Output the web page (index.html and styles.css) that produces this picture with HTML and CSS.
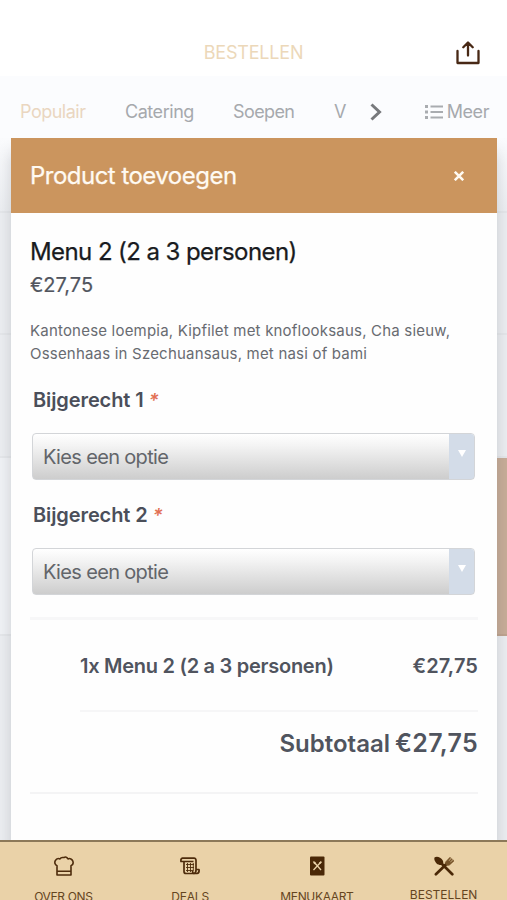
FILE: index.html
```
<!DOCTYPE html>
<html lang="nl">
<head>
<meta charset="utf-8">
<meta name="viewport" content="width=device-width, initial-scale=1">
<title>Bestellen</title>
<link rel="stylesheet" href="styles.css">
</head>
<body>
<div class="app">
  <header class="topbar">
    <h1 class="topbar-title">BESTELLEN</h1>
    <svg class="share" viewBox="0 0 24 24" fill="none" stroke="#482815" stroke-width="2.3" stroke-linecap="round" stroke-linejoin="round"><path d="M1.500 10v12h21V10M12 14.500V2M7.300 6.300L12 1.500L16.700 6.300"/></svg>
  </header>
  <nav class="tabs">
    <span class="tab tab-active">Populair</span>
    <span class="tab tab-catering">Catering</span>
    <span class="tab tab-soepen">Soepen</span>
    <span class="tab tab-cut">V</span>
    <svg class="chevron" viewBox="0 0 12 18" fill="none" stroke="#77797c" stroke-width="3"><path d="M1.500 1.500L9.500 9L1.500 16.500"/></svg>
    <span class="more">
      <svg class="list" viewBox="0 0 18 14" fill="#a9acb0"><path d="M0 0h3v3H0zM0 5.500h3v3H0zM0 11h3v3H0zM5.500 .5H18v2H5.500zM5.500 6H18v2H5.500zM5.500 11.500H18v2H5.500z"/></svg>
      <span class="tab tab-more">Meer</span>
    </span>
  </nav>
  <main class="stage">
    <div class="side"><i class="row row-a"></i><i class="row row-b"></i><i class="row row-c"></i><i class="row row-d"></i></div>
    <section class="modal">
      <div class="modal-head">
        <h2 class="modal-title">Product toevoegen</h2>
        <svg class="close" viewBox="0 0 10 10" stroke="#fffaf2" stroke-width="2.500"><path d="M.8 .8L9.200 9.200M9.200 .8L.8 9.200"/></svg>
      </div>
      <div class="modal-body">
        <h3 class="product">Menu 2 (2 a 3 personen)</h3>
        <p class="price">€27,75</p>
        <p class="desc">Kantonese loempia, Kipfilet met knoflooksaus, Cha sieuw,<br>Ossenhaas in Szechuansaus, met nasi of bami</p>
        <div class="field">
          <label class="label">Bijgerecht 1 <em class="star">*</em></label>
          <div class="select"><span class="value">Kies een optie</span><span class="arrow"><svg viewBox="0 0 8 7" class="tri"><path d="M0 0h8L4 7z" fill="#fff"/></svg></span></div>
        </div>
        <div class="field">
          <label class="label">Bijgerecht 2 <em class="star">*</em></label>
          <div class="select"><span class="value">Kies een optie</span><span class="arrow"><svg viewBox="0 0 8 7" class="tri"><path d="M0 0h8L4 7z" fill="#fff"/></svg></span></div>
        </div>
        <div class="summary">
          <div class="line"><span class="line-name">1x Menu 2 (2 a 3 personen)</span><span class="line-price">€27,75</span></div>
          <div class="subtotal">Subtotaal <span class="amount">€27,75</span></div>
        </div>
      </div>
    </section>
    <div class="side"><i class="row row-a"></i><i class="row row-b"></i><i class="row row-c"></i><i class="row row-d row-tan"></i></div>
  </main>
  <footer class="nav">
    <div class="item">
      <svg class="icon icon-hat" viewBox="0 0 20 20" fill="none" stroke="#4e2c0c" stroke-width="1.600" stroke-linejoin="round"><path d="M3 19V9.700C.8 8.800 .4 6.500 1.300 4.700C2.200 2.900 4.300 2.200 6 2.900C7.200 .7 8.800 1.800 10 1.500C11.500 .6 13 1 14 2.900C16 2 18.100 3.100 18.800 5C19.500 7 18.700 9 17 9.700V19zM3 15.200H17"/></svg>
      <span class="caption cap-tight">OVER ONS</span>
    </div>
    <div class="item">
      <svg class="icon" viewBox="0 0 20 20" fill="none" stroke="#4e2c0c" stroke-width="1.700" stroke-linejoin="round"><path d="M4 5.500V15.500Q4 17.500 6 17.500H17Q19.500 17 19 13.500H16V4.500Q16 2.200 14 2.200H2.500Q.5 2.500 1 5.500H13.500"/><path d="M16 14Q16 17.500 13.800 17.500Q12.500 17 12.500 15"/><path d="M6 8.500H14M6 11.500H14M6 14.500H13M7.500 7V16M10.500 7V16M13.300 7V15" stroke-width=".9"/></svg>
      <span class="caption cap-deals">DEALS</span>
    </div>
    <div class="item">
      <svg class="icon" viewBox="0 0 20 20"><rect x="3" y=".5" width="14.500" height="19" rx="1" fill="#4a2807"/><path d="M7 6L14 14M13.500 6.500L6.500 14" stroke="#ead2a8" stroke-width="1.300"/><path d="M5.800 5.300L8.500 6L8.800 8.600L7 8zM11.800 7L13.800 4.900L15 6.200L12.900 8.200z" fill="#ead2a8"/></svg>
      <span class="caption cap-tight">MENUKAART</span>
    </div>
    <div class="item item-current">
      <svg class="icon" viewBox="0 0 20 20" fill="#4a2807"><path d="M.7 1.200C3 -.2 7 1.200 8.500 4C9.500 5.700 9.500 7 8.700 8.500C6.800 9.300 4.200 8.800 2.600 7.400C.7 5.500 -.3 3 .7 1.200z"/><path d="M7 7L18.300 18.300M1.900 18.300L13 7.500" stroke="#4a2807" stroke-width="2.700" stroke-linecap="round"/><path d="M11.500 6L16 1.200L16.700 1.900L14.500 4.400L15.300 5.100L17.700 2.600L18.400 3.300L16 5.900L16.700 6.500L19.200 4.100L20 4.900L15.500 9Q13.500 10 12 8.500Q10.800 7.200 11.500 6z" fill="#765329" stroke="#765329" stroke-width=".6"/></svg>
      <span class="caption">BESTELLEN</span>
    </div>
  </footer>
</div>
</body>
</html>
```
FILE: styles.css
```
* { box-sizing: border-box; }
body { margin: 0; font-family: Inter, "Liberation Sans", sans-serif; background: #fff; }
h1, h2, h3, p { margin: 0; font-weight: 400; }
.app { width: 507px; height: 900px; display: flex; flex-direction: column; overflow: hidden; }
.topbar { height: 76px; flex: none; display: grid; grid-template-columns: 1fr auto 1fr; padding: 41px 27px 0; background: #fff; align-items: start; }
.topbar-title { grid-column: 2; font-size: 18px; line-height: 24px; color: #ecd8b9; letter-spacing: -.2px; white-space: nowrap; }
.share { justify-self: end; width: 24px; height: 24px; }
.tabs { height: 62px; flex: none; display: flex; align-items: center; padding: 9px 18px 0 20px; background: #fbfcfe; }
.tab { font-size: 18px; line-height: 24px; letter-spacing: -.45px; color: #a6a9ad; white-space: nowrap; }
.tab-active { width: 105px; letter-spacing: -.5px; color: #ead6c0; }
.tab-catering { width: 108px; }
.tab-soepen { width: 101px; letter-spacing: -.6px; }
.tab-cut { width: 36px; }
.chevron { width: 12px; height: 18px; }
.more { margin-left: auto; display: flex; align-items: center; gap: 4px; }
.list { width: 18px; height: 14px; }
.stage { height: 702px; flex: none; display: grid; grid-template-columns: 11px 486px 10px; background: #eceef1; }
.side { display: flex; flex-direction: column; background: linear-gradient(#fafbfd, #eceef1 75px); }
.row { flex: none; border-bottom: 2px solid #e5e7ea; }
.row-a { height: 75px; }
.row-b { height: 122px; }
.row-c { height: 123px; }
.row-d { height: 178px; background: #f0f2f5; }
.row-tan { background: #c8ad98; border-bottom-color: #bfa48f; }
.modal { display: flex; flex-direction: column; background: #fefefe; box-shadow: 0 14px 14px rgba(60, 65, 80, .2); clip-path: inset(0 -11px 0 -11px); }
.modal-head { height: 75px; flex: none; display: flex; align-items: center; justify-content: space-between; padding: 0 33px 0 19px; background: #cb955e; }
.modal-title { font-size: 24px; letter-spacing: -.52px; color: #fffaf2; white-space: nowrap; -webkit-text-stroke: .25px #fffaf2; }
.close { width: 10px; height: 10px; }
.modal-body { padding: 22px 19px 0; display: flex; flex-direction: column; }
.product { font-size: 24px; line-height: 34px; letter-spacing: -.58px; color: #191b20; white-space: nowrap; -webkit-text-stroke: .25px #191b20; }
.price { font-size: 20px; line-height: 32px; color: #51555e; -webkit-text-stroke: .2px #51555e; }
.desc { margin-top: 18px; font-size: 15px; line-height: 23px; letter-spacing: .2px; color: #686b71; white-space: nowrap; }
.field { width: 443px; margin-left: 2px; display: flex; flex-direction: column; height: 115px; }
.label { height: 49px; flex: none; padding: 21px 0 0 1px; font-size: 20px; line-height: 28px; letter-spacing: -.1px; font-weight: 600; color: #4b4f5a; }
.star { color: #e27155; font-size: 19px; line-height: 1; }
.select { margin-top: 19px; height: 47px; flex: none; display: flex; border: 1px solid #d3d5d8; border-radius: 4px; overflow: hidden; background: linear-gradient(#fff, #f4f4f4 25%, #cdcdcd); }
.value { flex: 1; padding-left: 10px; font-size: 20px; line-height: 46px; letter-spacing: -.66px; color: #62656a; }
.arrow { width: 25px; background: #d3dce8; display: flex; justify-content: center; padding-top: 16px; }
.tri { width: 8px; height: 7px; }
.summary { margin-top: 22px; border-top: 3px solid #f7f7f8; border-bottom: 2px solid #f4f4f5; height: 177px; }
.line { margin-left: 50px; height: 92px; display: flex; justify-content: space-between; border-bottom: 2px solid #f6f6f7; font-size: 20px; line-height: 92px; font-weight: 600; color: #50545e; white-space: nowrap; }
.line-name { letter-spacing: -.27px; }
.line-price { letter-spacing: .1px; }
.subtotal { text-align: right; font-size: 24px; line-height: 63px; font-weight: 600; color: #50545e; }
.amount { margin-left: -1px; font-size: 25px; letter-spacing: .3px; }
.nav { height: 60px; flex: none; display: flex; background: #ead2a8; border-top: 2px solid #8c7959; }
.item { flex: 1; display: flex; flex-direction: column; align-items: center; padding-top: 14px; }
.icon { width: 20px; height: 20px; flex: none; }
.icon-hat { margin-left: 1px; }
.caption { margin-top: 13px; font-size: 12px; line-height: 16px; color: #65451f; white-space: nowrap; }
.cap-tight { letter-spacing: -.35px; }
.cap-deals { letter-spacing: -.2px; }
.item-current .caption { margin-top: 11px; }
```
